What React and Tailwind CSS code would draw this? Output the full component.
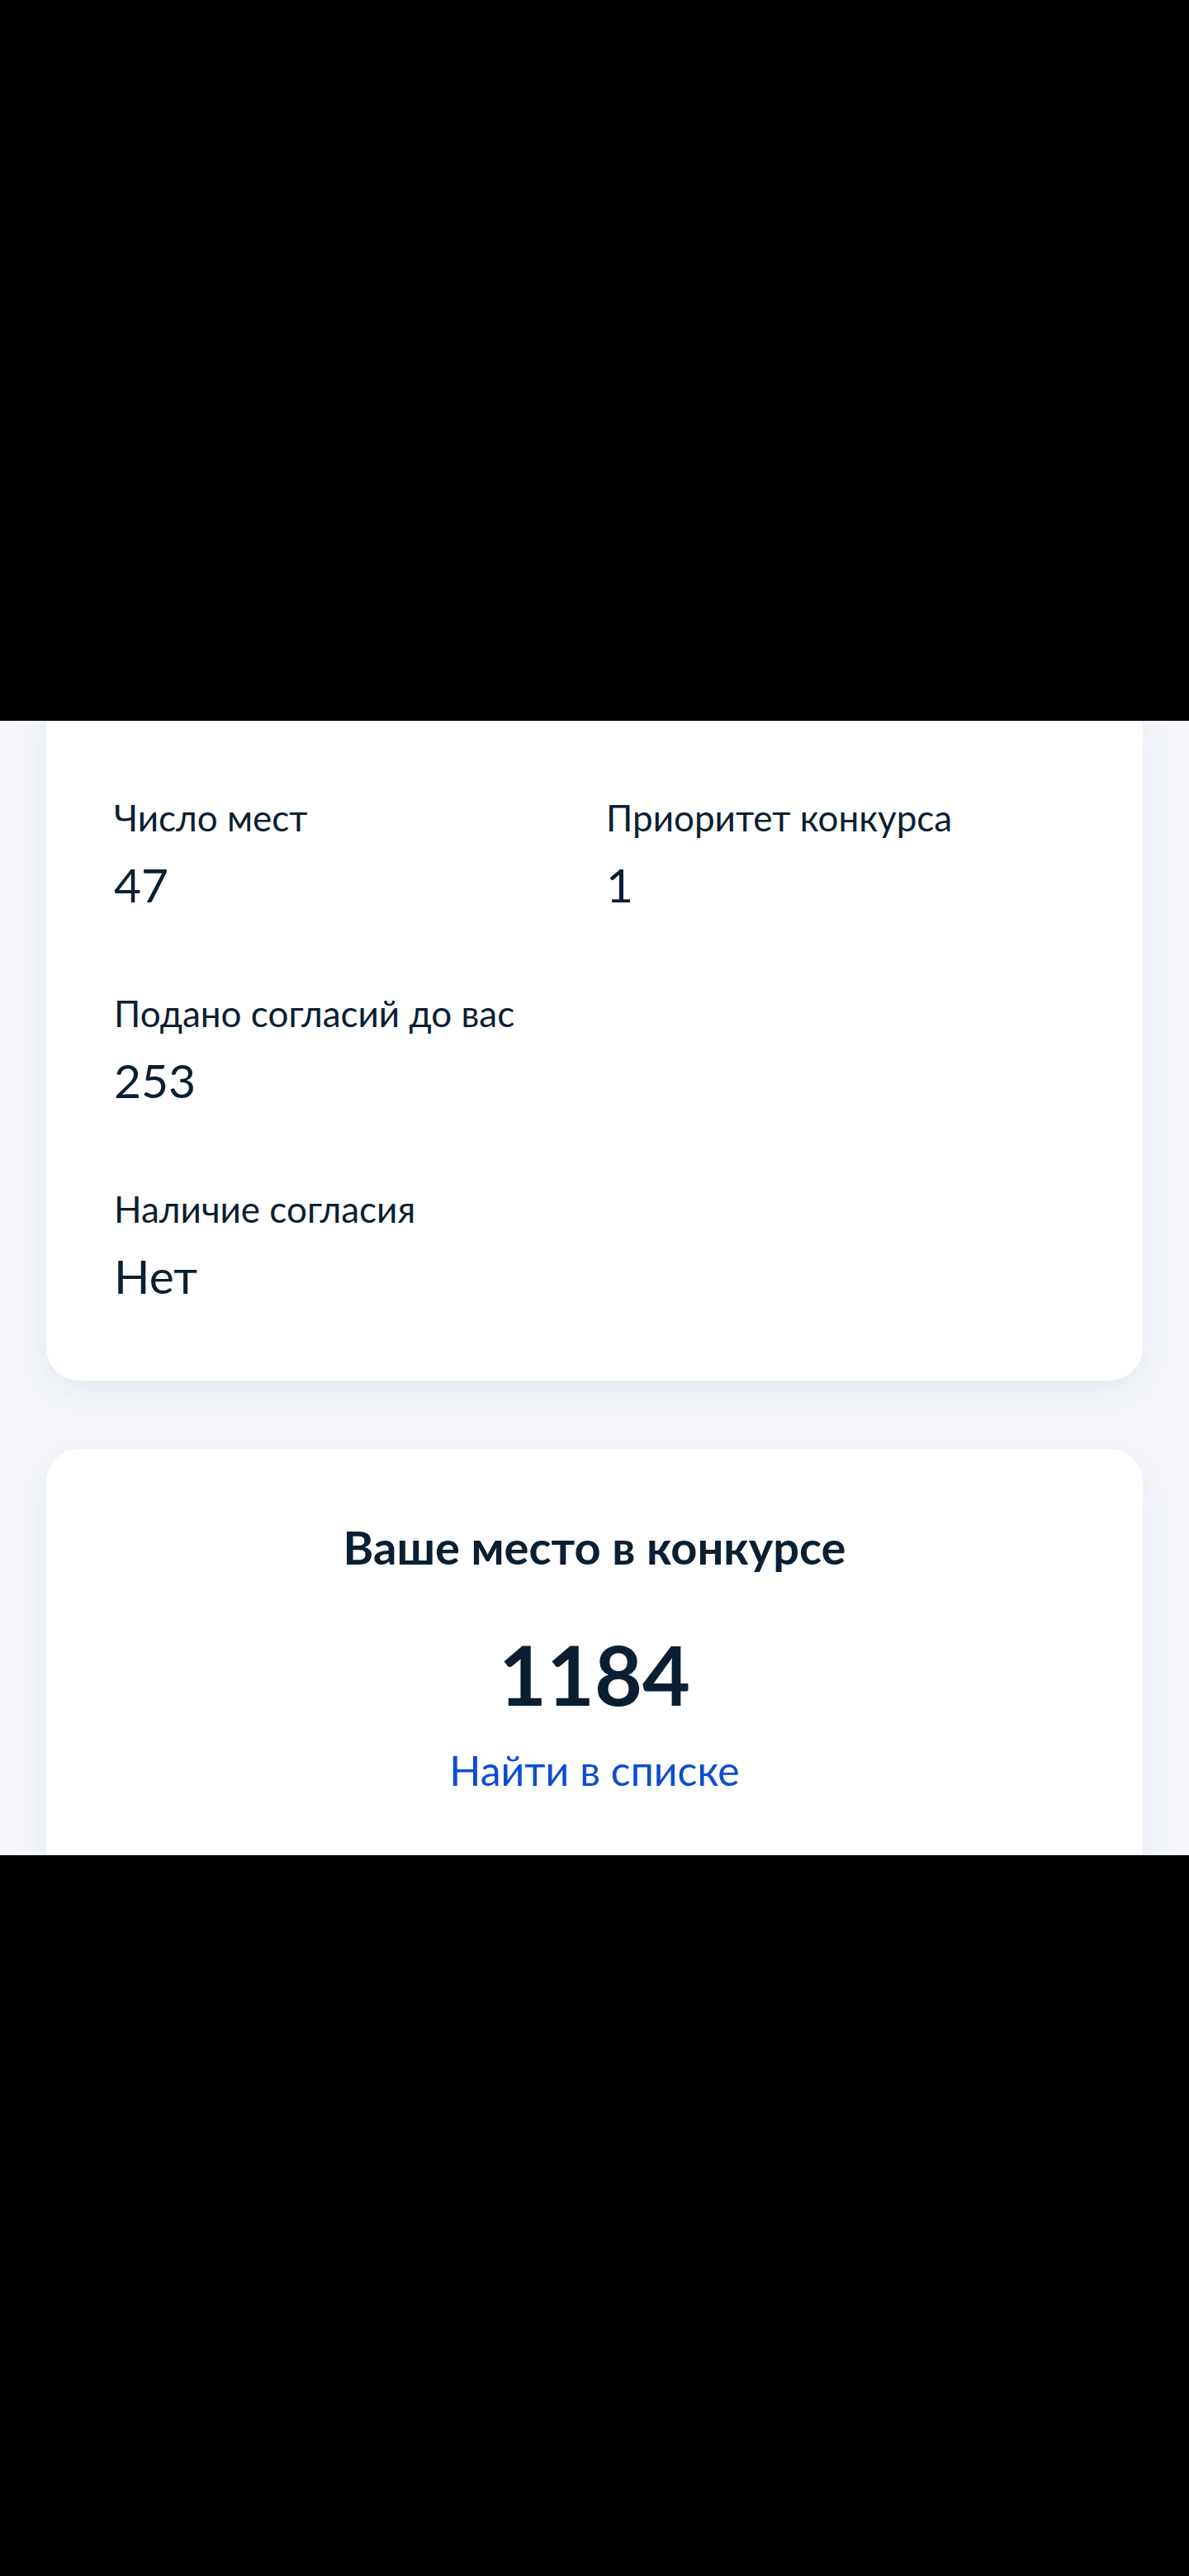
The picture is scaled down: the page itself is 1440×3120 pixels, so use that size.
import React from 'react'

const stats = [
  { label: 'Число мест', value: '47' },
  { label: 'Приоритет конкурса', value: '1' },
  { label: 'Подано согласий до вас', value: '253' },
  { label: null },
  { label: 'Наличие согласия', value: 'Нет' },
]

function Stat({ label, value }) {
  if (!label) return <div />
  return (
    <div className="flex flex-col">
      <span className="text-[44px] leading-[50px] text-[#0b1f33]">{label}</span>
      <span className="mt-[23px] text-[57px] leading-[66px] text-[#0b1f33]">{value}</span>
    </div>
  )
}

export default function App() {
  return (
    <div className="w-[1440px] bg-black font-['Lato','Liberation_Sans',sans-serif]">
      {/* status area */}
      <div className="h-[873px] bg-black" />

      <div className="h-[1374px] overflow-hidden bg-[#f5f7fa] px-[56px]">
        {/* details card, top cut off by the viewport */}
        <div className="-mt-[40px] rounded-[40px] bg-white px-[82px] pb-[94px] pt-[132px] shadow-[0_14px_40px_rgba(40,60,140,0.08)]">
          <div className="grid grid-cols-2 gap-x-[28px] gap-y-[98px]">
            {stats.map((s, i) => (
              <Stat key={i} {...s} />
            ))}
          </div>
        </div>

        {/* place card */}
        <div className="mt-[83px] flex flex-col items-center rounded-[40px] bg-white pb-[120px] pt-[83px] shadow-[0_14px_40px_rgba(40,60,140,0.08)]">
          <h2 className="text-[56px] font-bold leading-[72px] text-[#0b1f33]">Ваше место в конкурсе</h2>
          <div className="mt-[57px] text-[100px] font-bold leading-[120px] text-[#0b1f33]">1184</div>
          <a href="#" className="mt-[27px] text-[50px] leading-[60px] text-[#0d4cd3]">
            Найти в списке
          </a>
        </div>
      </div>

      <div className="h-[873px] bg-black" />
    </div>
  )
}
